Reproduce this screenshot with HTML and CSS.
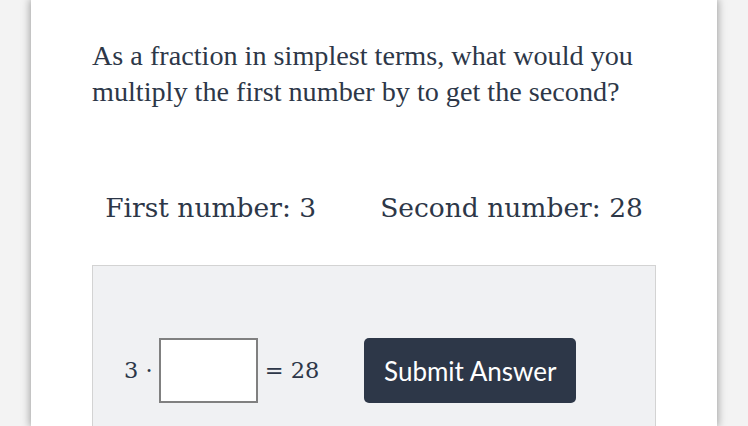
FILE: index.html
```html
<!DOCTYPE html>
<html>
<head>
<meta charset="utf-8">
<link rel="stylesheet" href="styles.css">
</head>
<body>
<div class="card">
  <p class="question">As a fraction in simplest terms, what would you multiply the first number by to get the second?</p>
  <div class="numbers">
    <span>First number: 3</span>
    <span>Second number: 28</span>
  </div>
  <div class="answer-box">
    <div class="equation">
      <span class="lhs">3 ·</span>
      <span class="input"></span>
      <span class="rhs">= 28</span>
    </div>
    <button class="submit">Submit Answer</button>
  </div>
</div>
</body>
</html>
```
FILE: styles.css
```css
html, body {
  margin: 0;
  padding: 0;
  height: 100%;
  overflow: hidden;
}
body {
  background: #f3f3f3;
}
.card {
  margin: 0 31px;
  height: 100%;
  background: #ffffff;
  box-shadow: 0 0 8px 1px rgba(0,0,0,0.35);
  padding: 38px 61px 0 61px;
  box-sizing: border-box;
  color: #2d3748;
  font-family: "Liberation Serif", serif;
}
.question {
  margin: 0;
  width: 564px;
  font-size: 28.2px;
  line-height: 36px;
}
.numbers {
  display: flex;
  justify-content: center;
  gap: 64px;
  width: 564px;
  margin-top: 78px;
  font-family: "DejaVu Serif", serif;
  font-size: 26.5px;
  line-height: 40px;
}
.answer-box {
  margin-top: 37px;
  width: 564px;
  height: 200px;
  box-sizing: border-box;
  border: 1px solid #d3d3d3;
  background: #f0f1f3;
  display: flex;
  align-items: flex-start;
  padding: 71px 0 0 31px;
}
.equation {
  display: flex;
  align-items: center;
  height: 66px;
  font-family: "DejaVu Serif", serif;
  font-size: 22.5px;
}
.lhs { margin-right: 6px; }
.input {
  width: 99px;
  height: 65px;
  box-sizing: border-box;
  border: 2px solid #808080;
  background: #fff;
}
.rhs { margin-left: 7px; }
.submit {
  margin-left: 45px;
  margin-top: 1px;
  width: 212px;
  height: 65px;
  border: none;
  border-radius: 5px;
  background: #2d3748;
  color: #fff;
  font-family: Lato, sans-serif;
  font-size: 26px;
}
```
